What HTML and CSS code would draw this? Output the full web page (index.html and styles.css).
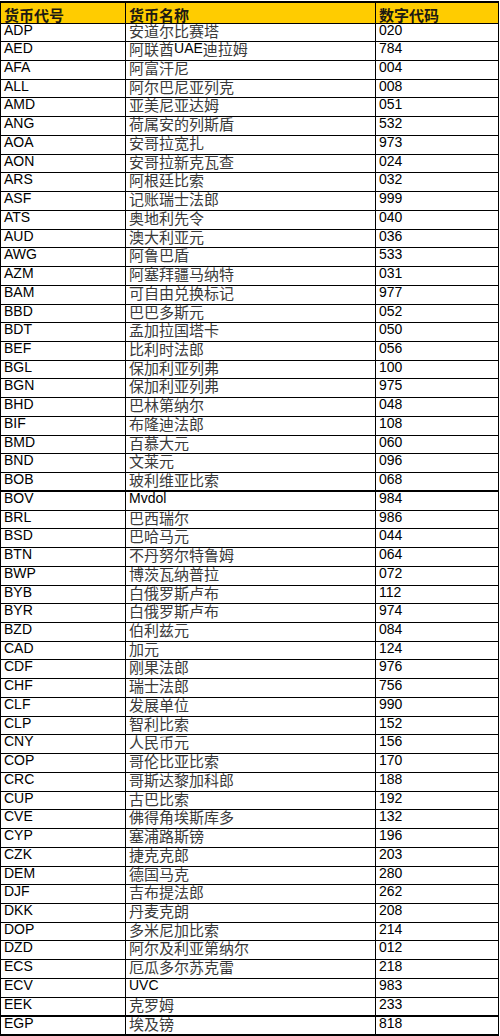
FILE: index.html
```html
<!DOCTYPE html>
<html lang="zh">
<head>
<meta charset="utf-8">
<title>货币代码</title>
<link rel="stylesheet" href="styles.css">
</head>
<body>
<table class="sheet">
<colgroup><col class="c1"><col class="c2"><col class="c3"></colgroup>
<thead>
<tr class="head"><th>货币代号</th><th>货币名称</th><th>数字代码</th></tr>
</thead>
<tbody>
<tr><td>ADP</td><td><span class="zh">安道尔比赛塔</span></td><td>020</td></tr>
<tr><td>AED</td><td><span class="zh">阿联酋</span>UAE<span class="zh">迪拉姆</span></td><td>784</td></tr>
<tr><td>AFA</td><td><span class="zh">阿富汗尼</span></td><td>004</td></tr>
<tr><td>ALL</td><td><span class="zh">阿尔巴尼亚列克</span></td><td>008</td></tr>
<tr><td>AMD</td><td><span class="zh">亚美尼亚达姆</span></td><td>051</td></tr>
<tr><td>ANG</td><td><span class="zh">荷属安的列斯盾</span></td><td>532</td></tr>
<tr><td>AOA</td><td><span class="zh">安哥拉宽扎</span></td><td>973</td></tr>
<tr><td>AON</td><td><span class="zh">安哥拉新克瓦查</span></td><td>024</td></tr>
<tr><td>ARS</td><td><span class="zh">阿根廷比索</span></td><td>032</td></tr>
<tr><td>ASF</td><td><span class="zh">记账瑞士法郎</span></td><td>999</td></tr>
<tr><td>ATS</td><td><span class="zh">奥地利先令</span></td><td>040</td></tr>
<tr><td>AUD</td><td><span class="zh">澳大利亚元</span></td><td>036</td></tr>
<tr><td>AWG</td><td><span class="zh">阿鲁巴盾</span></td><td>533</td></tr>
<tr><td>AZM</td><td><span class="zh">阿塞拜疆马纳特</span></td><td>031</td></tr>
<tr><td>BAM</td><td><span class="zh">可自由兑换标记</span></td><td>977</td></tr>
<tr><td>BBD</td><td><span class="zh">巴巴多斯元</span></td><td>052</td></tr>
<tr><td>BDT</td><td><span class="zh">孟加拉国塔卡</span></td><td>050</td></tr>
<tr><td>BEF</td><td><span class="zh">比利时法郎</span></td><td>056</td></tr>
<tr><td>BGL</td><td><span class="zh">保加利亚列弗</span></td><td>100</td></tr>
<tr><td>BGN</td><td><span class="zh">保加利亚列弗</span></td><td>975</td></tr>
<tr><td>BHD</td><td><span class="zh">巴林第纳尔</span></td><td>048</td></tr>
<tr><td>BIF</td><td><span class="zh">布隆迪法郎</span></td><td>108</td></tr>
<tr><td>BMD</td><td><span class="zh">百慕大元</span></td><td>060</td></tr>
<tr><td>BND</td><td><span class="zh">文莱元</span></td><td>096</td></tr>
<tr class="thick"><td>BOB</td><td><span class="zh">玻利维亚比索</span></td><td>068</td></tr>
<tr><td>BOV</td><td>Mvdol</td><td>984</td></tr>
<tr><td>BRL</td><td><span class="zh">巴西瑞尔</span></td><td>986</td></tr>
<tr><td>BSD</td><td><span class="zh">巴哈马元</span></td><td>044</td></tr>
<tr><td>BTN</td><td><span class="zh">不丹努尔特鲁姆</span></td><td>064</td></tr>
<tr><td>BWP</td><td><span class="zh">博茨瓦纳普拉</span></td><td>072</td></tr>
<tr><td>BYB</td><td><span class="zh">白俄罗斯卢布</span></td><td>112</td></tr>
<tr><td>BYR</td><td><span class="zh">白俄罗斯卢布</span></td><td>974</td></tr>
<tr><td>BZD</td><td><span class="zh">伯利兹元</span></td><td>084</td></tr>
<tr><td>CAD</td><td><span class="zh">加元</span></td><td>124</td></tr>
<tr><td>CDF</td><td><span class="zh">刚果法郎</span></td><td>976</td></tr>
<tr><td>CHF</td><td><span class="zh">瑞士法郎</span></td><td>756</td></tr>
<tr><td>CLF</td><td><span class="zh">发展单位</span></td><td>990</td></tr>
<tr><td>CLP</td><td><span class="zh">智利比索</span></td><td>152</td></tr>
<tr><td>CNY</td><td><span class="zh">人民币元</span></td><td>156</td></tr>
<tr><td>COP</td><td><span class="zh">哥伦比亚比索</span></td><td>170</td></tr>
<tr><td>CRC</td><td><span class="zh">哥斯达黎加科郎</span></td><td>188</td></tr>
<tr><td>CUP</td><td><span class="zh">古巴比索</span></td><td>192</td></tr>
<tr><td>CVE</td><td><span class="zh">佛得角埃斯库多</span></td><td>132</td></tr>
<tr><td>CYP</td><td><span class="zh">塞浦路斯镑</span></td><td>196</td></tr>
<tr><td>CZK</td><td><span class="zh">捷克克郎</span></td><td>203</td></tr>
<tr><td>DEM</td><td><span class="zh">德国马克</span></td><td>280</td></tr>
<tr><td>DJF</td><td><span class="zh">吉布提法郎</span></td><td>262</td></tr>
<tr><td>DKK</td><td><span class="zh">丹麦克朗</span></td><td>208</td></tr>
<tr><td>DOP</td><td><span class="zh">多米尼加比索</span></td><td>214</td></tr>
<tr><td>DZD</td><td><span class="zh">阿尔及利亚第纳尔</span></td><td>012</td></tr>
<tr><td>ECS</td><td><span class="zh">厄瓜多尔苏克雷</span></td><td>218</td></tr>
<tr><td>ECV</td><td>UVC</td><td>983</td></tr>
<tr class="thick"><td>EEK</td><td><span class="zh">克罗姆</span></td><td>233</td></tr>
<tr class="last"><td>EGP</td><td><span class="zh">埃及镑</span></td><td>818</td></tr>
</tbody>
</table>
</body>
</html>
```

FILE: styles.css
```css
html, body {
  margin: 0;
  padding: 0;
  background: #ffffff;
}

.sheet {
  border-collapse: collapse;
  table-layout: fixed;
  width: 498px;
  margin: 1px 0 0 0;
  font-family: "Liberation Sans", "Noto Sans CJK SC", sans-serif;
  font-size: 14px;
  color: #000000;
}

.c1 { width: 125px; }
.c2 { width: 250px; }
.c3 { width: 123px; }

.sheet th,
.sheet td {
  border: 1px solid #000000;
  padding: 0 0 0 3px;
  text-align: left;
  vertical-align: top;
  line-height: 13px;
  white-space: nowrap;
}

.sheet tbody tr {
  height: 18.74px;
}

.sheet thead tr {
  height: 21px;
}

.sheet th {
  background: #ffcc00;
  font-family: "Noto Sans CJK SC", sans-serif;
  font-weight: bold;
  font-size: 15px;
  color: #1c1a12;
  line-height: 17px;
  vertical-align: bottom;
  border-width: 2px 1px 1px 1px;
}

.zh {
  font-family: "Noto Sans CJK SC", sans-serif;
  font-size: 15px;
  color: #3a3a3a;
  vertical-align: -2px;
}

.sheet tr.thick td {
  border-bottom-width: 2px;
}

.sheet tr.last td {
  border-bottom-width: 2px;
}
```
